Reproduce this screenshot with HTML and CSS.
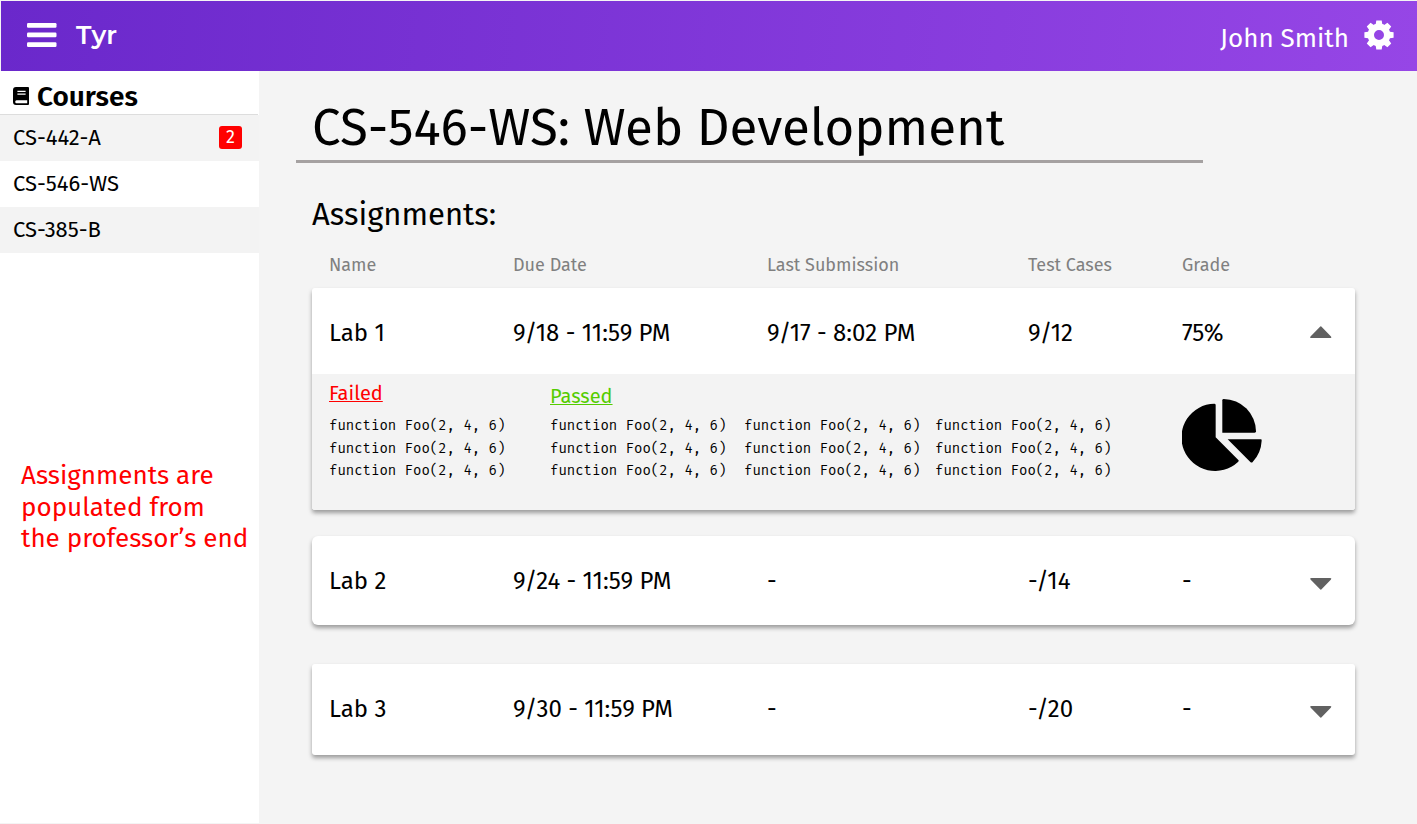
FILE: index.html
```
<!DOCTYPE html>
<html lang="en">
<head>
<meta charset="utf-8">
<title>Tyr</title>
<link rel="stylesheet" href="styles.css">
</head>
<body>
<header class="topbar">
  <svg class="menu-icon" viewBox="0 0 30 24"><rect y="0" width="29.5" height="4.7" rx="1.2"/><rect y="9.6" width="29.5" height="4.7" rx="1.2"/><rect y="19.2" width="29.5" height="4.7" rx="1.2"/></svg>
  <span class="brand">Tyr</span>
  <span class="user">John Smith</span>
  <svg class="gear-icon" viewBox="-15 -15 30 30"><circle r="8.2" fill="none" stroke="#fff" stroke-width="6.4"/><g id="t"><path d="M-3.6 -9L-2.7 -14.6H2.7L3.6 -9ZM-3.6 9L-2.7 14.6H2.7L3.6 9ZM-9 -3.6L-14.6 -2.7V2.7L-9 3.6ZM9 -3.6L14.6 -2.7V2.7L9 3.6Z"/></g><use href="#t" transform="rotate(45)"/></svg>
</header>
<div class="layout">
  <aside class="sidebar">
    <h2 class="side-title"><svg class="book-icon" viewBox="0 0 16 18"><path fill-rule="evenodd" d="M3 0H15Q16 0 16 1V17Q16 18 15 18H3Q0 18 0 15V3Q0 0 3 0ZM4.4 3.8V5H12.6V3.8ZM4.4 6.6V7.8H12.6V6.6ZM3.6 13.3Q2.2 13.3 2.2 14.8T3.6 16.3H14.2V13.3Z"/></svg><span>Courses</span></h2>
    <ul class="courses">
      <li class="course shaded"><span>CS-442-A</span><span class="badge">2</span></li>
      <li class="course"><span>CS-546-WS</span></li>
      <li class="course shaded"><span>CS-385-B</span></li>
    </ul>
    <p class="note">Assignments are<br>populated from<br>the professor’s end</p>
  </aside>
  <main class="main">
    <h1 class="page-title">CS-546-WS: Web Development</h1>
    <h2 class="section-title">Assignments:</h2>
    <div class="columns head"><span>Name</span><span>Due Date</span><span>Last Submission</span><span>Test Cases</span><span>Grade</span></div>

    <section class="card">
      <div class="columns row"><span>Lab 1</span><span>9/18 - 11:59 PM</span><span>9/17 - 8:02 PM</span><span>9/12</span><span>75%</span><svg class="chevron" viewBox="0 0 22 12"><path d="M1.5 12Q-.5 12 .5 10.6L9.8 .9Q10.8-.2 11.8 .9L21 10.6Q22 12 20 12Z"/></svg></div>
      <div class="detail">
        <div class="group">
          <h3 class="group-title failed">Failed</h3>
          <div class="calls"><code>function Foo(2, 4, 6)</code><code>function Foo(2, 4, 6)</code><code>function Foo(2, 4, 6)</code></div>
        </div>
        <div class="group">
          <h3 class="group-title passed">Passed</h3>
          <div class="call-columns">
            <div class="calls"><code>function Foo(2, 4, 6)</code><code>function Foo(2, 4, 6)</code><code>function Foo(2, 4, 6)</code></div>
            <div class="calls"><code>function Foo(2, 4, 6)</code><code>function Foo(2, 4, 6)</code><code>function Foo(2, 4, 6)</code></div>
            <div class="calls"><code>function Foo(2, 4, 6)</code><code>function Foo(2, 4, 6)</code><code>function Foo(2, 4, 6)</code></div>
          </div>
        </div>
        <svg class="pie" viewBox="0 0 240 216"><path d="M101 18Q101 14 97 14A101 101 0 1 0 168 189Q172 186 169 183L101 115Z"/><path d="M121 4Q121 0 125 0A98 98 0 0 1 222 97Q222 101 218 101H121Z"/><path d="M137 121H236Q240 121 239 125A101 101 0 0 1 212 189Q209 192 205 189Z"/></svg>
      </div>
    </section>

    <section class="card second">
      <div class="columns row"><span>Lab 2</span><span>9/24 - 11:59 PM</span><span>-</span><span>-/14</span><span>-</span><svg class="chevron" viewBox="0 0 22 12"><path d="M1.5 0Q-.5 0 .5 1.4L9.8 11.1Q10.8 12.2 11.8 11.1L21 1.4Q22 0 20 0Z"/></svg></div>
    </section>

    <section class="card third">
      <div class="columns row"><span>Lab 3</span><span>9/30 - 11:59 PM</span><span>-</span><span>-/20</span><span>-</span><svg class="chevron" viewBox="0 0 22 12"><path d="M1.5 0Q-.5 0 .5 1.4L9.8 11.1Q10.8 12.2 11.8 11.1L21 1.4Q22 0 20 0Z"/></svg></div>
    </section>
  </main>
</div>
</body>
</html>
```
FILE: styles.css
```
* { box-sizing: border-box; }
body { margin: 0; height: 824px; padding: 1px 0; background: #f4f4f4; color: #000; font-family: "Fira Sans", "Noto Sans", sans-serif; overflow: hidden; }
h1, h2, h3, p, ul { margin: 0; padding: 0; font-weight: 400; }
svg { display: block; flex: none; }

.topbar { height: 70px; margin-left: 1px; padding: 0 23px 0 26px; display: flex; align-items: center; background: linear-gradient(95deg, #6a28cb, #9646e6); color: #fff; }
.menu-icon { width: 30px; height: 24px; fill: #fff; margin-bottom: 2px; }
.brand { margin: 0 0 2px 19px; font: 600 25.6px/32px Montserrat, Inter, sans-serif; }
.user { margin-left: auto; font-size: 26px; line-height: 36px; padding-top: 5px; }
.gear-icon { width: 30px; height: 30px; margin: 0 0 2px 15px; fill: #fff; }

.layout { display: flex; height: 752px; }
.sidebar { width: 259px; background: #fff; }
.side-title { width: 258px; height: 44px; padding: 8px 0 0 13px; display: flex; gap: 8px; align-items: center; border-bottom: 1px solid #ddd; font-size: 28px; line-height: 35px; font-weight: 600; }
.book-icon { width: 16px; height: 18px; margin-bottom: 1px; }
.courses { list-style: none; }
.course { height: 46px; padding: 0 17px 1px 13px; display: flex; align-items: center; justify-content: space-between; font-size: 22px; }
.shaded { background: #f3f3f3; }
.badge { width: 23px; height: 23px; border-radius: 3px; background: #f00; color: #fff; font-size: 18px; line-height: 22px; text-align: center; }
.note { margin: 207px 0 0 21px; color: #f00; font-size: 26px; line-height: 31.5px; white-space: nowrap; }

.main { width: 1096px; padding-left: 37px; }
.page-title { width: 907px; height: 92px; padding: 22px 0 0 16px; border-bottom: 3px solid #a5a1a1; font-size: 51px; line-height: 70px; white-space: nowrap; }
.section-title { margin: 31px 0 0 16px; font-size: 31px; line-height: 41px; }
.columns { display: grid; grid-template-columns: 184px 254px 261px 154px 128px 1fr; align-items: center; padding-left: 17px; white-space: nowrap; }
.head { margin-left: 16px; height: 53px; padding-top: 7px; color: #808080; font-size: 18px; }
.card { margin-left: 16px; background: #fff; border-radius: 3px; box-shadow: 0 3px 4px rgba(0, 0, 0, .36); }
.row { height: 86px; padding-top: 4px; font-size: 24px; }
.chevron { width: 22px; height: 12px; margin-bottom: 2px; fill: #616161; }
.second { height: 89px; margin-top: 26px; border-radius: 6px; }
.second .row { height: 89px; padding-top: 1px; }
.second .chevron, .third .chevron { margin: 6px 0 0; }
.third { height: 91px; margin-top: 39px; }
.third .row { height: 90px; padding-top: 0; }

.detail { height: 136px; padding-left: 17px; display: flex; background: #f3f3f3; border-radius: 0 0 3px 3px; }
.group { display: flex; flex-direction: column; margin-right: 44px; }
.group-title { height: 41px; font-size: 20px; line-height: 26px; text-decoration: underline; text-decoration-thickness: 1px; }
.failed { color: #f00; padding-top: 6px; }
.passed { color: #5c0; padding-top: 9px; }
.call-columns { display: grid; grid-template-columns: 194px 191px 177px; }
.calls { display: flex; flex-direction: column; }
.calls code { width: 177px; font: 14px/22.5px "Fira Mono", "DejaVu Sans Mono", monospace; white-space: pre; }
.pie { width: 80px; height: 72px; margin: 25px 0 0 26px; }
```
